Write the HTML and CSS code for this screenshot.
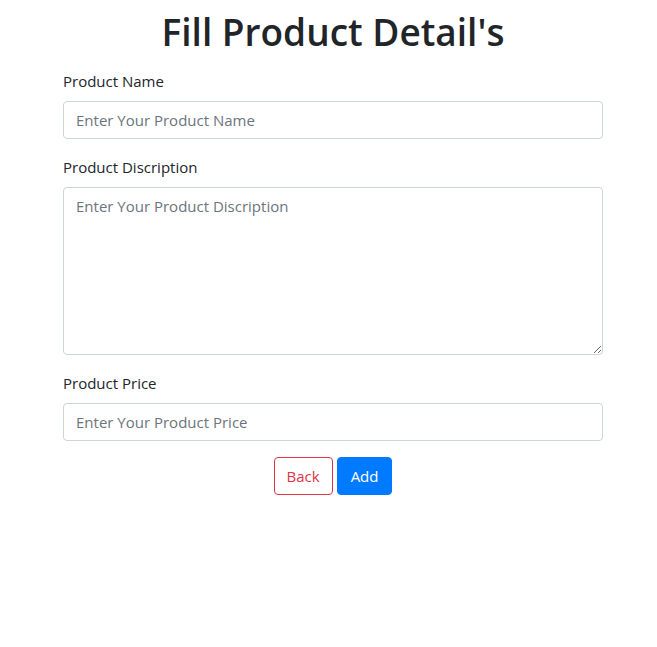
FILE: index.html
```html
<!DOCTYPE html>
<html lang="en">
<head>
<meta charset="utf-8">
<title>Fill Product Detail's</title>
<link rel="stylesheet" href="styles.css">
</head>
<body>
<div class="container">
  <h1 class="title">Fill Product Detail's</h1>
  <form class="form">
    <div class="form-group">
      <label class="label" for="name">Product Name</label>
      <input class="control" id="name" type="text" placeholder="Enter Your Product Name">
    </div>
    <div class="form-group">
      <label class="label" for="desc">Product Discription</label>
      <textarea class="control textarea" id="desc" placeholder="Enter Your Product Discription"></textarea>
    </div>
    <div class="form-group">
      <label class="label" for="price">Product Price</label>
      <input class="control" id="price" type="text" placeholder="Enter Your Product Price">
    </div>
    <div class="actions">
      <button type="button" class="btn btn-outline-danger">Back</button>
      <button type="button" class="btn btn-primary">Add</button>
    </div>
  </form>
</div>
</body>
</html>
```

FILE: styles.css
```css
* { box-sizing: border-box; }
html, body { margin: 0; padding: 0; background: #fff; }
body {
  font-family: "Open Sans", "Noto Sans", "Liberation Sans", sans-serif;
  font-size: 16px;
  line-height: 1.5;
  color: #212529;
}
.container {
  width: 540px;
  margin-left: 63px;
}
.title {
  margin: 0;
  padding-top: 8px;
  margin-bottom: 13px;
  font-size: 37px;
  font-weight: 600;
  line-height: 48px;
  text-align: center;
}
.form-group { margin-bottom: 16px; display: flex; flex-direction: column; }
.label { display: block; margin-bottom: 8px; font-size: 15px; line-height: 24px; }
.control {
  display: block;
  width: 100%;
  height: 38px;
  padding: 6px 12px;
  font-family: inherit;
  font-size: 15px;
  line-height: 24px;
  color: #495057;
  background: #fff;
  border: 1px solid #ced4da;
  border-radius: 4px;
  outline: none;
}
.control::placeholder { color: #6c757d; opacity: 1; }
.textarea { height: 168px; resize: vertical; }
.actions { display: flex; justify-content: center; gap: 4px; }
.btn {
  height: 38px;
  padding: 6px 12px;
  font-family: inherit;
  font-size: 15px;
  line-height: 24px;
  border-radius: 4px;
  border: 1px solid transparent;
  cursor: pointer;
}
.btn-outline-danger { color: #dc3545; background: #fff; border-color: #dc3545; }
.btn-primary { color: #fff; background: #007bff; border-color: #007bff; padding: 6px 13px; }
```
